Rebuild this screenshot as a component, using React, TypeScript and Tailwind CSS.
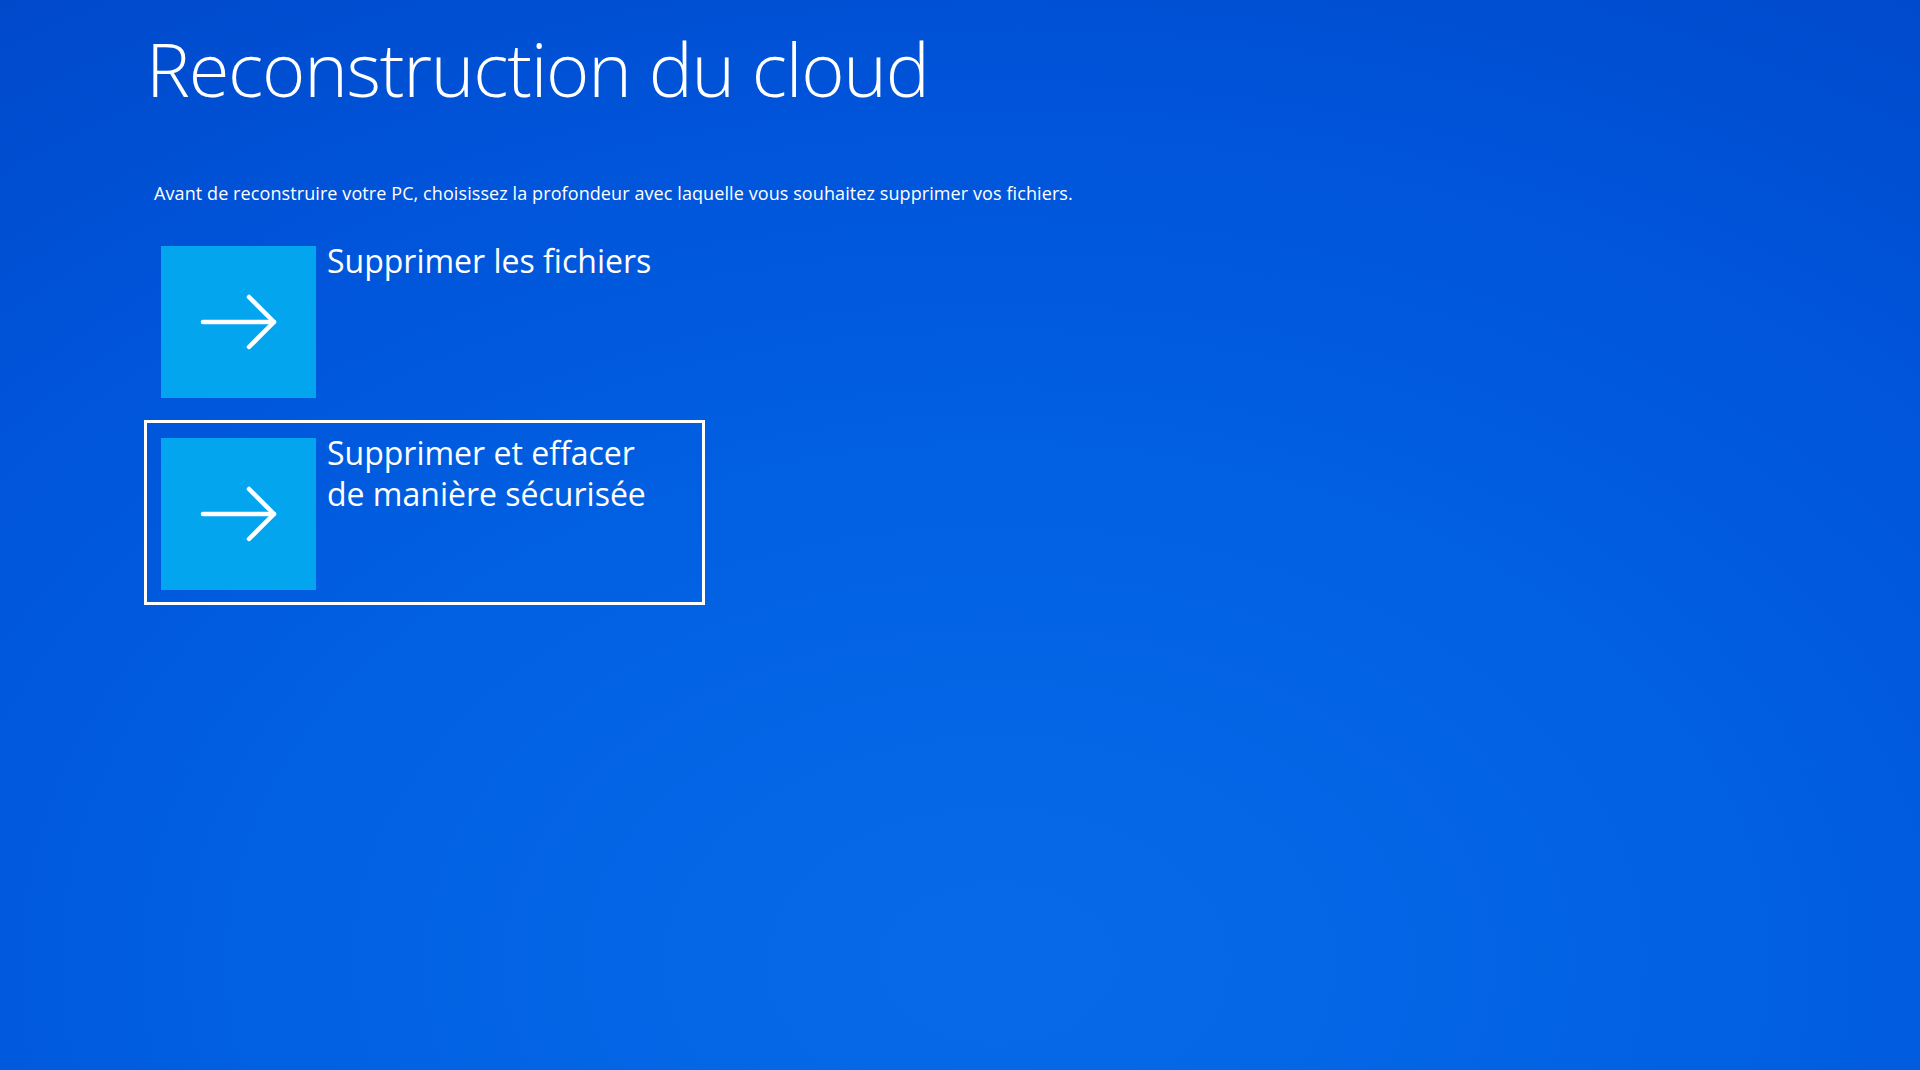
import { ReactNode } from "react";

function Arrow() {
  return (
    <svg width="80" height="60" viewBox="0 0 80 60" fill="none" stroke="white" strokeWidth="4.5" strokeLinecap="round" strokeLinejoin="round">
      <line x1="4" y1="30" x2="75" y2="30" />
      <polyline points="50,5 75,30 50,55" />
    </svg>
  );
}

function Option({ focused, children }: { focused?: boolean; children: ReactNode }) {
  return (
    <button
      className={
        focused
          ? "flex w-[561px] items-start border-[3px] border-white pt-[15px] pb-[12px] px-[14px] text-left"
          : "flex w-[561px] items-start border-[3px] border-transparent pt-[15px] pb-[12px] px-[14px] text-left"
      }
    >
      <div className="flex h-[152px] w-[155px] shrink-0 items-center justify-center bg-[#03a5ee]">
        <Arrow />
      </div>
      <div className="ml-[11px] mt-[-6px] text-[32px] leading-[41px] text-white">{children}</div>
    </button>
  );
}

export default function App() {
  return (
    <div
      className="h-[1070px] w-full overflow-hidden bg-[radial-gradient(ellipse_95%_115%_at_52%_90%,#0769e8_0%,#0262e3_35%,#0054d9_70%,#0047c9_100%)] text-white"
      style={{ fontFamily: '"Open Sans", "Noto Sans", sans-serif' }}
    >
      <div className="pl-[144px] pt-[32px]">
        <h1 className="pl-[2px] text-[74px] font-light leading-none tracking-[-0.017em]">Reconstruction du cloud</h1>
        <p className="mt-[78px] pl-[10px] text-[18px] leading-none tracking-[0.005em]">
          Avant de reconstruire votre PC, choisissez la profondeur avec laquelle vous souhaitez supprimer vos fichiers.
        </p>
        <div className="mt-[26px] flex flex-col gap-[7px]">
          <Option>Supprimer les fichiers</Option>
          <Option focused>
            Supprimer et effacer
            <br />
            de manière sécurisée
          </Option>
        </div>
      </div>
    </div>
  );
}
